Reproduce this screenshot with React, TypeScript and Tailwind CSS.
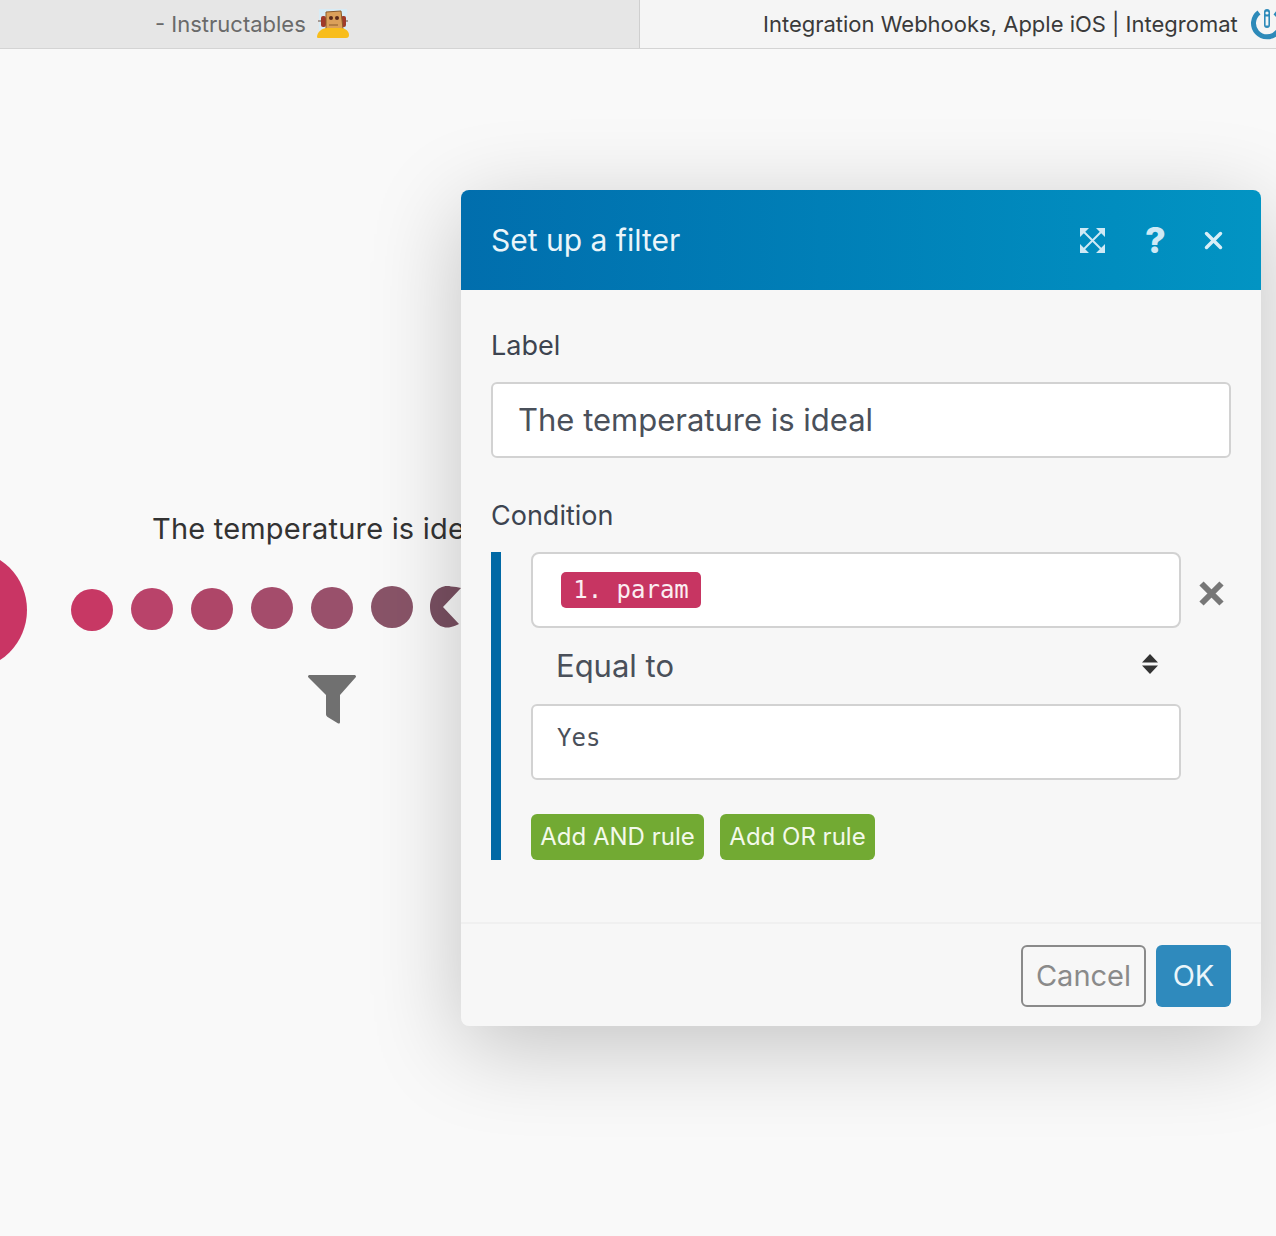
import React from "react";

const dots = [
  { x: 71, y: 589, c: "bg-[#c73864]" },
  { x: 131, y: 588, c: "bg-[#b9436a]" },
  { x: 191, y: 588, c: "bg-[#ae4668]" },
  { x: 251, y: 587, c: "bg-[#a44c6b]" },
  { x: 311, y: 587, c: "bg-[#99506b]" },
  { x: 371, y: 586, c: "bg-[#895468]" },
];

function Robot() {
  return (
    <svg width="34" height="30" viewBox="0 0 34 30">
      <rect x="3" y="0" width="28" height="28" fill="#d8ecf6" />
      <path d="M2 12h30" stroke="#6b4a3a" strokeWidth="1" />
      <rect x="5" y="7" width="5" height="11" rx="2" fill="#a03a2a" />
      <rect x="25" y="7" width="5" height="11" rx="2" fill="#a03a2a" />
      <path d="M10 3l15-1 2 18H10z" fill="#dba05a" stroke="#8a5a2a" strokeWidth="1" />
      <circle cx="15" cy="9" r="2" fill="#5a2a1a" />
      <circle cx="21" cy="9" r="2" fill="#5a2a1a" />
      <path d="M13 16h9" stroke="#8a5a2a" strokeWidth="1" />
      <path d="M1 28c0-5 5-9 10-9h14c4 0 8 3 8 7 0 2-1 3-3 3H4c-2 0-3 0-3-1z" fill="#f8bd1c" />
    </svg>
  );
}

function Tabs() {
  return (
    <div className="flex h-[49px] border-b border-[#d4d4d4] text-[22px] leading-none">
      <div className="flex w-[640px] items-center border-r border-[#cfcfcf] bg-[#e6e6e6] pl-[155px] text-[#6a6a6a]">
        <span>- Instructables</span>
        <span className="ml-[10px]"><Robot /></span>
      </div>
      <div className="flex flex-1 items-center overflow-hidden whitespace-nowrap bg-[#f5f5f5] pl-[123px] text-[#3a3a3a]">
        <span>Integration Webhooks, Apple iOS | Integromat</span>
        <svg className="ml-[11px] shrink-0" width="36" height="36" viewBox="0 0 36 36">
          <path d="M10 6.5a13.5 13.5 0 1 0 16 0" fill="none" stroke="#2d8ab9" strokeWidth="5" />
          <rect x="15" y="3" width="6" height="19" rx="3" fill="#2d8ab9" />
          <circle cx="18" cy="7" r="1.6" fill="#f5f5f5" />
          <rect x="16.6" y="10.5" width="2.8" height="9" fill="#f5f5f5" />
        </svg>
      </div>
    </div>
  );
}

function Scenario() {
  return (
    <>
      <div className="absolute left-[-93px] top-[550px] h-[120px] w-[120px] rounded-full bg-[#c93564]" />
      {dots.map((d) => (
        <div
          key={d.x}
          className={`absolute h-[42px] w-[42px] rounded-full ${d.c}`}
          style={{ left: d.x, top: d.y }}
        />
      ))}
      <svg className="absolute left-[429px] top-[585px]" width="32" height="44" viewBox="0 0 32 44">
        <path d="M22 1.5C10 -1 1 9 1 22s10 23 21 20c4-1 6-2 8-3L14 22 32 3c-3-1-6-1-10-1.5z" fill="#7a5062" />
      </svg>
      <div className="absolute left-[152px] top-[511px] whitespace-nowrap text-[29px] leading-[36px] tracking-[0.2px] text-[#333]">
        The temperature is ideal
      </div>
      <svg className="absolute left-[308px] top-[675px]" width="48" height="49" viewBox="0 0 48 49">
        <path d="M2 0h44c2 0 2.500 1.500 1.500 2.500L32 20v27c0 1.500-1 2-2.200 1.300l-9.800-6c-1-.6-2-1.500-2-3V20L.5 2.500C-.5 1.500 0 0 2 0z" fill="#707070" />
      </svg>
    </>
  );
}

function ModalHeader() {
  return (
    <div className="flex h-[100px] items-center rounded-t-[8px] bg-gradient-to-r from-[#016ead] to-[#0294c3] pl-[30px] pr-[38px]">
      <h2 className="flex-1 text-[30px] font-normal leading-none text-[#eaf5fa]">Set up a filter</h2>
      <svg width="27" height="27" viewBox="0 0 27 27" fill="none" stroke="#cfe9f5">
        <path d="M4 4l19 19M23 4L4 23" strokeWidth="2" />
        <path d="M1 1h9l-3 3-3 3-3 3zM26 1h-9l9 9zM1 26h9l-9-9zM26 26h-9l9-9z" fill="#cfe9f5" strokeWidth="0" />
      </svg>
      <span className="ml-[36px] w-[27px] text-center text-[36px] font-extrabold leading-none text-[#cfe9f5]">?</span>
      <svg className="ml-[35px]" width="19" height="19" viewBox="0 0 19 19" stroke="#d8eef7" strokeWidth="3.500" strokeLinecap="round">
        <path d="M2.500 2.500l14 14M16.500 2.500l-14 14" />
      </svg>
    </div>
  );
}

function ModalBody() {
  return (
    <div className="flex-1 px-[30px] pt-[39px]">
      <label className="block text-[27px] leading-[34px] text-[#3d4450]">Label</label>
      <div className="mt-[19px] flex h-[76px] items-center rounded-[6px] border-2 border-[#d2d2d2] bg-white pl-[25px] text-[31px] text-[#4a505a]">
        The temperature is ideal
      </div>

      <label className="mt-[41px] block text-[27px] leading-[34px] text-[#3d4450]">Condition</label>
      <div className="mt-[19px] flex h-[308px] border-l-[10px] border-[#0169a5] pl-[30px]">
        <div className="w-[650px]">
          <div className="flex h-[76px] items-center rounded-[8px] border-2 border-[#d2d2d2] bg-white pl-[28px]">
            <span className="flex h-[36px] w-[140px] items-center justify-center rounded-[5px] bg-[#c73562] font-['DejaVu_Sans_Mono',monospace] text-[24px] text-[#fbeef2]">
              1. param
            </span>
          </div>
          <div className="flex h-[76px] items-center pl-[25px] pr-[22px] text-[31px] text-[#4a505a]">
            <span className="flex-1">Equal to</span>
            <svg width="18" height="22" viewBox="0 0 18 22" fill="#333" className="mb-[4px]">
              <path d="M9 1l8 8.500H1zM9 21l8-8.500H1z" />
            </svg>
          </div>
          <div className="flex h-[76px] rounded-[6px] border-2 border-[#d2d2d2] bg-white pl-[24px] pt-[16px] font-['DejaVu_Sans_Mono',monospace] text-[24px] leading-[32px] text-[#4a505a]">
            Yes
          </div>
          <div className="mt-[34px] flex gap-[16px]">
            <button className="h-[46px] w-[173px] rounded-[6px] bg-[#72aa33] text-[24px] text-[#f3f9ea]">Add AND rule</button>
            <button className="h-[46px] w-[155px] rounded-[6px] bg-[#72aa33] text-[24px] text-[#f3f9ea]">Add OR rule</button>
          </div>
        </div>
        <svg className="ml-[18px] mt-[29px]" width="25" height="25" viewBox="0 0 25 25" stroke="#777" strokeWidth="6">
          <path d="M2.500 2.500l20 20M22.500 2.500l-20 20" />
        </svg>
      </div>
    </div>
  );
}

function ModalFooter() {
  return (
    <div className="flex h-[104px] items-start justify-end gap-[10px] border-t-2 border-[#f0f0f0] pr-[30px] pt-[21px]">
      <button className="h-[62px] w-[125px] rounded-[6px] border-2 border-[#8a8a8a] text-[29px] text-[#8a8a8a]">Cancel</button>
      <button className="h-[62px] w-[75px] rounded-[6px] bg-[#2f8abd] text-[29px] text-[#eaf5fa]">OK</button>
    </div>
  );
}

export default function App() {
  return (
    <div className="relative h-[1236px] w-[1276px] overflow-hidden bg-[#f9f9f9] font-['Inter',sans-serif]">
      <Tabs />
      <Scenario />
      <div className="absolute left-[461px] top-[190px] flex h-[836px] w-[800px] flex-col rounded-[8px] bg-[#f7f7f7] shadow-[0_20px_90px_rgba(0,0,0,0.22)]">
        <ModalHeader />
        <ModalBody />
        <ModalFooter />
      </div>
    </div>
  );
}
